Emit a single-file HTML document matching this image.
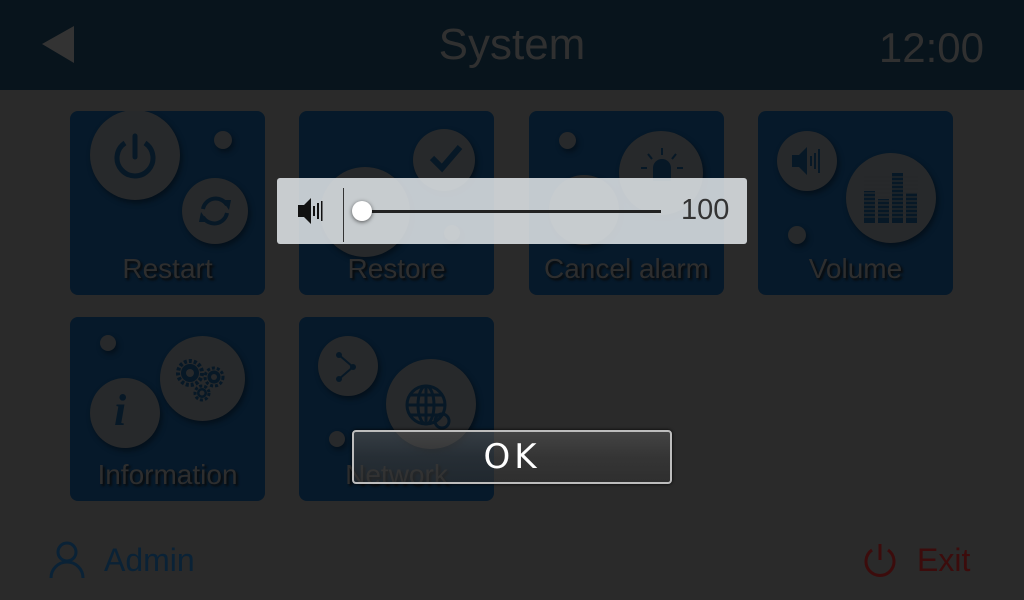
<!DOCTYPE html><html><head><style>
*{margin:0;padding:0;box-sizing:border-box}
body{width:1024px;height:600px;overflow:hidden;background:#2a2a2a;font-family:"Liberation Sans",sans-serif;position:relative}
.hdr{position:absolute;left:0;top:0;width:1024px;height:90px;background:#08141c}
.tile{position:absolute;width:195px;height:184px;background:#06192a;border-radius:8px;overflow:hidden}
.c{position:absolute;border-radius:50%;background:#27292b;box-shadow:2px 3px 6px rgba(0,0,0,.4)}
.lbl{position:absolute;left:0;width:100%;text-align:center;bottom:10px;font-size:28px;color:#2e2e2e;text-shadow:2px 2px 2px #0a0a0a}
svg{position:absolute}
</style></head><body>
<div class="hdr">
<svg style="left:42px;top:26px" width="34" height="38"><polygon points="32,0 32,37 0,18" fill="#333"/></svg>
<div style="position:absolute;left:0;width:1024px;top:20px;text-align:center;font-size:44px;color:#303030">System</div>
<div style="position:absolute;right:40px;top:24px;font-size:42px;color:#303030">12:00</div>
</div>

<div class="tile" style="left:70px;top:111px">
<div class="c" style="left:20px;top:-1px;width:90px;height:90px"></div>
<div class="c" style="left:112px;top:67px;width:66px;height:66px"></div>
<div class="c" style="left:144px;top:20px;width:18px;height:18px"></div>
<svg style="left:40px;top:20px" width="50" height="50" viewBox="0 0 50 50"><path d="M15 12 A18 18 0 1 0 35 12" fill="none" stroke="#071826" stroke-width="5"/><line x1="25" y1="5" x2="25" y2="26" stroke="#071826" stroke-width="5" stroke-linecap="round"/></svg>
<svg style="left:125px;top:80px" width="40" height="40" viewBox="0 0 40 40"><path d="M8 18 A13 13 0 0 1 32 14 M32 22 A13 13 0 0 1 8 26" fill="none" stroke="#071826" stroke-width="4"/><polygon points="27,9 36,9 34,19" fill="#071826"/><polygon points="13,31 4,31 6,21" fill="#071826"/></svg>
<div class="lbl">Restart</div></div>

<div class="tile" style="left:299px;top:111px">
<div class="c" style="left:21px;top:56px;width:90px;height:90px"></div>
<div class="c" style="left:114px;top:18px;width:62px;height:62px"></div>
<div class="c" style="left:145px;top:114px;width:16px;height:16px"></div>
<svg style="left:130px;top:33px" width="34" height="30"><path d="M3 14 L13 24 L31 3" fill="none" stroke="#071826" stroke-width="6"/></svg>
<div class="lbl">Restore</div></div>

<div class="tile" style="left:529px;top:111px">
<div class="c" style="left:30px;top:21px;width:17px;height:17px"></div>
<div class="c" style="left:90px;top:20px;width:84px;height:84px"></div>
<div class="c" style="left:20px;top:64px;width:70px;height:70px"></div>
<svg style="left:110px;top:35px" width="46" height="40"><path d="M14 35 V22 A9 9 0 0 1 32 22 V35 Z" fill="#071826"/><g stroke="#071826" stroke-width="2"><line x1="23" y1="2" x2="23" y2="9"/><line x1="9" y1="8" x2="13" y2="13"/><line x1="37" y1="8" x2="33" y2="13"/><line x1="2" y1="22" x2="8" y2="22"/><line x1="38" y1="22" x2="44" y2="22"/></g></svg>
<div class="lbl">Cancel alarm</div></div>

<div class="tile" style="left:758px;top:111px">
<div class="c" style="left:19px;top:20px;width:60px;height:60px"></div>
<div class="c" style="left:88px;top:42px;width:90px;height:90px"></div>
<div class="c" style="left:30px;top:115px;width:18px;height:18px"></div>
<svg style="left:33px;top:34px" width="34" height="34"><polygon points="1,10 8,10 16,2 16,30 8,22 1,22" fill="#071826"/><rect x="19" y="11" width="2" height="10" fill="#071826"/><rect x="23" y="8" width="2" height="16" fill="#071826"/><rect x="27" y="4" width="2" height="24" fill="#071826"/></svg>
<svg style="left:106px;top:62px" width="54" height="50"><g fill="#071826"><rect x="0" y="18" width="11" height="32"/><rect x="14" y="26" width="11" height="24"/><rect x="28" y="0" width="11" height="50"/><rect x="42" y="20" width="11" height="30"/></g><g stroke="#27292b" stroke-width="1.2"><line x1="0" y1="4" x2="54" y2="4"/><line x1="0" y1="8" x2="54" y2="8"/><line x1="0" y1="12" x2="54" y2="12"/><line x1="0" y1="16" x2="54" y2="16"/><line x1="0" y1="20" x2="54" y2="20"/><line x1="0" y1="24" x2="54" y2="24"/><line x1="0" y1="28" x2="54" y2="28"/><line x1="0" y1="32" x2="54" y2="32"/><line x1="0" y1="36" x2="54" y2="36"/><line x1="0" y1="40" x2="54" y2="40"/><line x1="0" y1="44" x2="54" y2="44"/></g></svg>
<div class="lbl">Volume</div></div>

<div class="tile" style="left:70px;top:317px">
<div class="c" style="left:30px;top:18px;width:16px;height:16px"></div>
<div class="c" style="left:90px;top:19px;width:85px;height:85px"></div>
<div class="c" style="left:20px;top:61px;width:70px;height:70px"></div>
<svg style="left:102px;top:38px" width="62" height="50"><g fill="none" stroke="#071826" stroke-dasharray="3 2"><circle cx="18" cy="18" r="12" stroke-width="4"/><circle cx="42" cy="22" r="9" stroke-width="3"/><circle cx="30" cy="38" r="7" stroke-width="3"/></g><g fill="#071826"><circle cx="18" cy="18" r="9"/><circle cx="42" cy="22" r="6.5"/><circle cx="30" cy="38" r="5"/></g><g fill="#27292b"><circle cx="18" cy="18" r="4"/><circle cx="42" cy="22" r="3"/><circle cx="30" cy="38" r="2.5"/></g></svg>
<div style="position:absolute;left:44px;top:68px;font-family:'Liberation Serif',serif;font-style:italic;font-weight:bold;font-size:44px;color:#071826">i</div>
<div class="lbl">Information</div></div>

<div class="tile" style="left:299px;top:317px">
<div class="c" style="left:19px;top:19px;width:60px;height:60px"></div>
<div class="c" style="left:87px;top:42px;width:90px;height:90px"></div>
<div class="c" style="left:30px;top:114px;width:16px;height:16px"></div>
<svg style="left:36px;top:34px" width="26" height="32"><path d="M4 4 L18 16 L4 28" fill="none" stroke="#071826" stroke-width="2"/><circle cx="4" cy="4" r="3" fill="#071826"/><circle cx="18" cy="16" r="3" fill="#071826"/><circle cx="4" cy="28" r="3" fill="#071826"/></svg>
<svg style="left:105px;top:66px" width="50" height="50"><g fill="none" stroke="#071826" stroke-width="3"><circle cx="22" cy="22" r="19"/><ellipse cx="22" cy="22" rx="8" ry="19"/><line x1="3" y1="22" x2="41" y2="22"/><line x1="22" y1="3" x2="22" y2="41"/><line x1="6" y1="12" x2="38" y2="12"/><line x1="6" y1="32" x2="38" y2="32"/><circle cx="38" cy="38" r="7"/></g></svg>
<div class="lbl">Network</div></div>

<svg style="left:48px;top:540px" width="38" height="40"><circle cx="19" cy="12" r="9" fill="none" stroke="#0a2236" stroke-width="3"/><path d="M3 38 A16 16 0 0 1 35 38" fill="none" stroke="#0a2236" stroke-width="3"/></svg>
<div style="position:absolute;left:104px;top:542px;font-size:32px;color:#0a2236">Admin</div>
<svg style="left:862px;top:540px" width="36" height="40"><path d="M10 10 A14 14 0 1 0 26 10" fill="none" stroke="#3c0c0c" stroke-width="3"/><line x1="18" y1="4" x2="18" y2="20" stroke="#3c0c0c" stroke-width="3"/></svg>
<div style="position:absolute;left:917px;top:542px;font-size:32px;color:#3c0c0c">Exit</div>

<div style="position:absolute;left:277px;top:178px;width:470px;height:66px;background:rgba(222,227,230,.88);border-radius:3px">
<svg style="left:20px;top:18px" width="28" height="30"><polygon points="1,9 7,9 14,2 14,28 7,21 1,21" fill="#111"/><rect x="16" y="10" width="2" height="10" fill="#111"/><rect x="20" y="7" width="2" height="16" fill="#111"/><rect x="24" y="5" width="1.5" height="20" fill="#111"/></svg>
<div style="position:absolute;left:66px;top:10px;width:1px;height:54px;background:#333"></div>
<div style="position:absolute;left:85px;top:32px;width:299px;height:3px;background:#222"></div>
<div style="position:absolute;left:75px;top:23px;width:20px;height:20px;border-radius:50%;background:#fff;box-shadow:0 1px 4px rgba(0,0,0,.6)"></div>
<div style="position:absolute;left:404px;top:16px;font-size:29px;color:#333">100</div>
</div>

<div style="position:absolute;left:352px;top:430px;width:320px;height:54px;border:2px solid #bdbdbd;border-radius:4px;background:linear-gradient(rgba(85,85,85,.6),rgba(60,60,60,.6) 50%,rgba(50,50,50,.6));box-shadow:0 0 3px #000;text-align:center;line-height:50px;font-size:34px;color:#fff;letter-spacing:4px;font-family:'DejaVu Sans',sans-serif">OK</div>
</body></html>
